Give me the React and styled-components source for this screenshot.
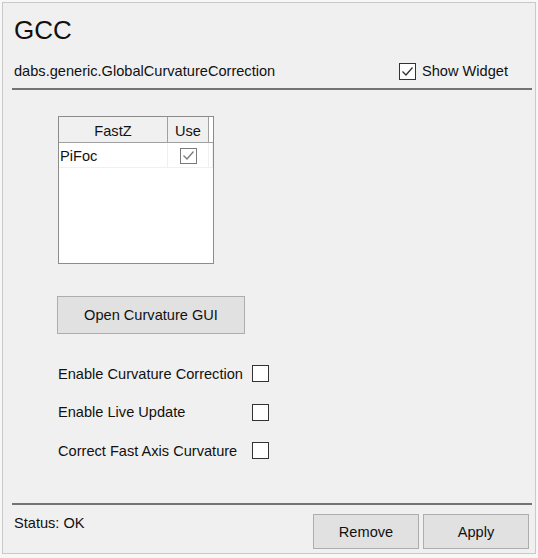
import React from 'react';
import styled, { createGlobalStyle } from 'styled-components';

const GlobalStyle = createGlobalStyle`
    html, body {
        margin: 0;
        padding: 0;
        background: #f7f7f7;
    }
    * {
        box-sizing: border-box;
    }
`;

const Frame = styled.div`
    margin: 2px;
    width: 534px;
    height: 552px;
    border: 1px solid #c9c9c9;
    background: #f0f0f0;
    display: flex;
    flex-direction: column;
    font-family: "Liberation Sans", Arial, sans-serif;
    font-size: 14.6px;
    color: #111;
`;

const Header = styled.div`
    padding: 12px 27px 0 11px;
`;

const Title = styled.div`
    font-size: 26px;
    line-height: 30px;
`;

const SubRow = styled.div`
    margin-top: 17px;
    height: 18px;
    line-height: 18px;
    display: flex;
    align-items: center;
    justify-content: space-between;
`;

const Separator = styled.div`
    height: 2px;
    margin: ${(p) => p.$top || 0}px 3px 0 9px;
    background: #737373;
`;

const Body = styled.div`
    padding: 26px 0 0 55px;
    display: flex;
    flex-direction: column;
    align-items: flex-start;
`;

const Table = styled.div`
    width: 156px;
    height: 148px;
    border: 1px solid #8c8c8c;
    background: #fff;
    display: grid;
    grid-template-columns: 109px 41px 1fr;
    grid-template-rows: 26px 25px;
    align-content: start;
`;

const HeadCell = styled.div`
    background: #f0f0f0;
    border-bottom: 1px solid #a0a0a0;
    border-right: 1px solid #a0a0a0;
    display: flex;
    align-items: center;
    justify-content: center;
    padding-top: 2px;
    &:nth-child(3) {
        background: #fff;
        border-right: none;
    }
`;

const Cell = styled.div`
    border-bottom: 1px solid #f0f0f0;
    border-right: 1px solid #f0f0f0;
    display: flex;
    align-items: center;
    justify-content: ${(p) => (p.$center ? 'center' : 'flex-start')};
    padding-left: ${(p) => (p.$center ? 0 : 1)}px;
    padding-top: 1px;
`;

const Button = styled.button`
    font: inherit;
    color: #111;
    background: #e1e1e1;
    border: 1px solid #adadad;
    border-radius: 0;
    padding: 0;
    width: ${(p) => p.$w}px;
    height: ${(p) => p.$h}px;
`;

const OpenButton = styled(Button)`
    margin: 32px 0 0 -1px;
`;

const Options = styled.div`
    margin-top: 31px;
    display: grid;
    grid-template-columns: 194px 17px;
    grid-auto-rows: 17px;
    row-gap: 21.5px;
    align-items: center;
`;

const Box = styled.span`
    width: ${(p) => p.$w || 17}px;
    height: ${(p) => p.$h || 17}px;
    border: 1px solid ${(p) => p.$color || '#333'};
    background: #fff;
    display: inline-flex;
    align-items: center;
    justify-content: center;
    flex: none;
`;

const CheckLabel = styled.label`
    display: flex;
    align-items: center;
    gap: 6px;
`;

const Footer = styled.div`
    margin-top: auto;
`;

const FooterRow = styled.div`
    display: flex;
    justify-content: space-between;
    align-items: flex-start;
    padding: 9px 6px 4px 11px;
    line-height: 18px;
`;

const Buttons = styled.div`
    display: flex;
    gap: 4px;
`;

const Check = ({ checked, color, w, h }) => (
    <Box $color={color} $w={w} $h={h}>
        {checked && (
            <svg width="13" height="11" viewBox="0 0 13 11">
                <path d="M1.5 5.5 L5 9 L11.5 1.5" fill="none" stroke={color || '#333'} strokeWidth="1.3" />
            </svg>
        )}
    </Box>
);

const options = [
    'Enable Curvature Correction',
    'Enable Live Update',
    'Correct Fast Axis Curvature',
];

const App = () => {
    return (
        <>
            <GlobalStyle />
            <Frame>
                <Header>
                    <Title>GCC</Title>
                    <SubRow>
                        <span>dabs.generic.GlobalCurvatureCorrection</span>
                        <CheckLabel>
                            <Check checked />
                            Show Widget
                        </CheckLabel>
                    </SubRow>
                </Header>
                <Separator $top={8} />
                <Body>
                    <Table>
                        <HeadCell>FastZ</HeadCell>
                        <HeadCell>Use</HeadCell>
                        <HeadCell />
                        <Cell>PiFoc</Cell>
                        <Cell $center>
                            <Check checked color="#7a7a7a" h={16} />
                        </Cell>
                        <Cell />
                    </Table>
                    <OpenButton $w={188} $h={38}>Open Curvature GUI</OpenButton>
                    <Options>
                        {options.map((label) => (
                            <React.Fragment key={label}>
                                <span>{label}</span>
                                <Check />
                            </React.Fragment>
                        ))}
                    </Options>
                </Body>
                <Footer>
                    <Separator />
                    <FooterRow>
                        <span>Status: OK</span>
                        <Buttons>
                            <Button $w={106} $h={35}>Remove</Button>
                            <Button $w={106} $h={35}>Apply</Button>
                        </Buttons>
                    </FooterRow>
                </Footer>
            </Frame>
        </>
    );
};

export default App;
